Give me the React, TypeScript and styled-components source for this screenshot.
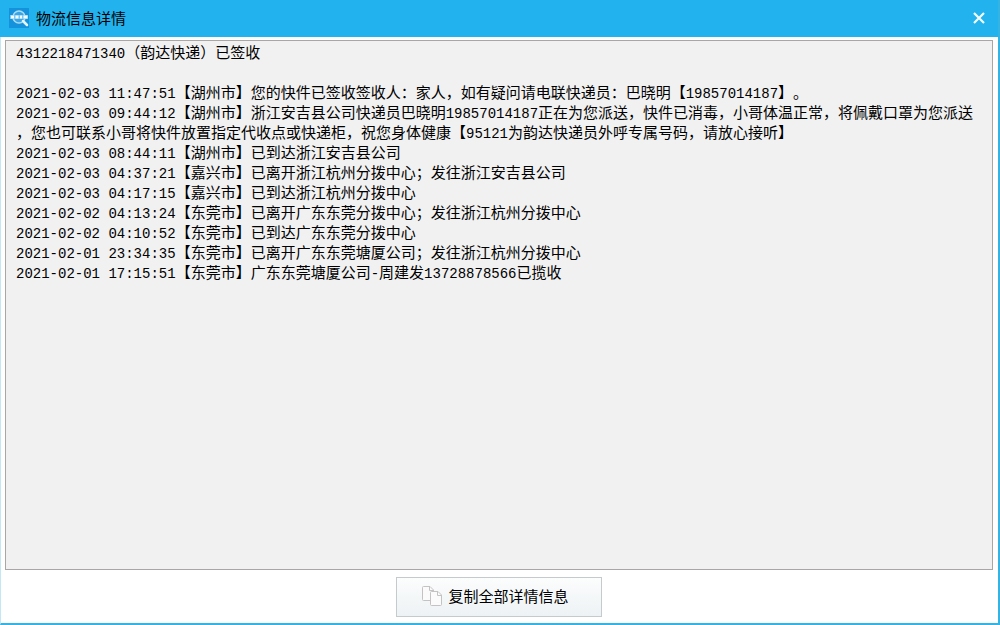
import React from "react";
import styled, { createGlobalStyle } from "styled-components";

const GlobalStyle = createGlobalStyle`
  * { box-sizing: border-box; }
  body { margin: 0; background: #fff; }
`;

const Dialog = styled.main`
  display: flex;
  flex-direction: column;
  min-height: 100vh;
  background: #fff;
  border: solid #35b3e2;
  border-width: 0 2px 2px 0;
  border-left: 1px solid #c3e7f5;
  color: #000;
  font: 15px/20px "Noto Sans CJK SC", sans-serif;
  text-spacing-trim: space-all;
`;

const TitleBar = styled.header`
  display: flex;
  align-items: center;
  gap: 7px;
  height: 37px;
  margin-left: -1px;
  padding: 0 12px 2px 9px;
  background: #22b3ef;
`;

const Title = styled.h1`
  flex: 1;
  margin: 0;
  font-size: 15px;
  font-weight: 400;
`;

const CloseButton = styled.button`
  display: flex;
  padding: 0;
  border: 0;
  background: none;
`;

const Details = styled.section`
  flex: 1;
  margin: 3px 5px 0 4px;
  padding: 1px 10px;
  border: 1px solid #aaa6a6;
  background: #f1f1f1;
`;

const Summary = styled.p`
  margin: 0 0 20px;
`;

const Events = styled.ol`
  margin: 0;
  padding: 0;
  list-style: none;
`;

const Event = styled.li`
  line-break: anywhere;
`;

const Latin = styled.span`
  font-family: "Liberation Mono", monospace;
  font-size: 14px;
  line-height: 1;
`;

const Footer = styled.footer`
  display: flex;
  justify-content: center;
  padding: 7px 1px 6px 0;
`;

const CopyButton = styled.button`
  display: flex;
  align-items: center;
  gap: 6px;
  height: 40px;
  padding: 0 32px 2px 25px;
  border: 1px solid #c5cacd;
  background: linear-gradient(#fcfdfd, #edf2f4);
  color: #000;
  font: inherit;
`;

const events = [
  "2021-02-03 11:47:51【湖州市】您的快件已签收签收人：家人，如有疑问请电联快递员：巴晓明【19857014187】。",
  "2021-02-03 09:44:12【湖州市】浙江安吉县公司快递员巴晓明19857014187正在为您派送，快件已消毒，小哥体温正常，将佩戴口罩为您派送，您也可联系小哥将快件放置指定代收点或快递柜，祝您身体健康【95121为韵达快递员外呼专属号码，请放心接听】",
  "2021-02-03 08:44:11【湖州市】已到达浙江安吉县公司",
  "2021-02-03 04:37:21【嘉兴市】已离开浙江杭州分拨中心；发往浙江安吉县公司",
  "2021-02-03 04:17:15【嘉兴市】已到达浙江杭州分拨中心",
  "2021-02-02 04:13:24【东莞市】已离开广东东莞分拨中心；发往浙江杭州分拨中心",
  "2021-02-02 04:10:52【东莞市】已到达广东东莞分拨中心",
  "2021-02-01 23:34:35【东莞市】已离开广东东莞塘厦公司；发往浙江杭州分拨中心",
  "2021-02-01 17:15:51【东莞市】广东东莞塘厦公司-周建发13728878566已揽收",
];

/* Sets digits and ASCII punctuation in the fixed-width face. */
function MixedText({ text }: { text: string }) {
  return (
    <>
      {text.split(/([\x20-\x7e]+)/).map((part, i) =>
        i % 2 ? <Latin key={i}>{part}</Latin> : part
      )}
    </>
  );
}

function AppIcon() {
  return (
    <svg width="20" height="20" viewBox="0 0 20 20" aria-hidden="true">
      <rect width="20" height="20" fill="#1592dc" />
      <circle cx="10" cy="9" r="6" fill="#3aa5e2" stroke="#a9dcf7" strokeWidth="1.5" />
      <path d="M14 13l4 4" stroke="#e4f5fd" strokeWidth="2.500" strokeLinecap="round" />
      <rect x="1" y="7" width="18" height="4" fill="#7cc6f0" />
      <path d="M2 9h3M6.500 9h3M11 9h2M14.500 9h4" stroke="#f4fbff" strokeWidth="3" />
    </svg>
  );
}

function CopyIcon() {
  return (
    <svg width="20" height="20" viewBox="0 0 20 20" fill="#fbfbfb" stroke="#c4c2c2" aria-hidden="true">
      <path d="M.5 1.500q0-1 1-1h6.500l3.500 3.500v10.500h-10q-1 0-1-1z" />
      <path d="M7.500 .5v4h4" fill="none" />
      <path d="M8.500 6.500q0-1 1-1h6.500l3.500 3.500v9.500q0 1-1 1h-9q-1 0-1-1z" />
      <path d="M15.500 5.500v4h4" fill="none" />
    </svg>
  );
}

export default function App() {
  return (
    <>
      <GlobalStyle />
      <Dialog>
        <TitleBar>
          <AppIcon />
          <Title>物流信息详情</Title>
          <CloseButton type="button" aria-label="关闭">
            <svg width="14" height="14" viewBox="0 0 14 14" aria-hidden="true">
              <path d="M2 2l10 10M12 2L2 12" stroke="#f2fbff" strokeWidth="2.200" />
            </svg>
          </CloseButton>
        </TitleBar>
        <Details>
          <Summary>
            <MixedText text="4312218471340（韵达快递）已签收" />
          </Summary>
          <Events>
            {events.map((text) => (
              <Event key={text}>
                <MixedText text={text} />
              </Event>
            ))}
          </Events>
        </Details>
        <Footer>
          <CopyButton type="button">
            <CopyIcon />
            复制全部详情信息
          </CopyButton>
        </Footer>
      </Dialog>
    </>
  );
}
